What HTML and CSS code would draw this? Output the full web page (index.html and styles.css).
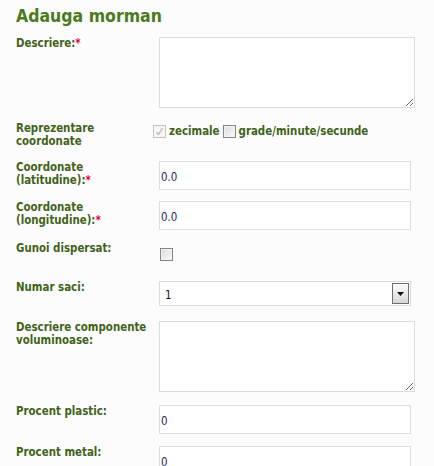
FILE: index.html
```html
<!DOCTYPE html>
<html>
<head>
<meta charset="utf-8">
<link rel="stylesheet" href="styles.css">
</head>
<body>
<h1 class="title">Adauga morman</h1>
<form class="form">
  <div class="row r1">
    <label class="lbl">Descriere:<span class="req">*</span></label>
    <div class="field"><textarea class="area"></textarea></div>
  </div>
  <div class="row r2">
    <label class="lbl">Reprezentare<br>coordonate</label>
    <div class="field checks">
      <span class="cb cb-on"><svg width="11" height="11" viewBox="0 0 11 11"><path d="M2.5 6.5 L4.5 8.5 L8.5 2" fill="none" stroke="#b8b8b8" stroke-width="1.3"/></svg></span>
      <span class="ctext">zecimale</span>
      <span class="cb cb-off"></span>
      <span class="ctext">grade/minute/secunde</span>
    </div>
  </div>
  <div class="row r3">
    <label class="lbl">Coordonate<br>(latitudine):<span class="req">*</span></label>
    <div class="field"><input class="txt" type="text" value="0.0"></div>
  </div>
  <div class="row r4">
    <label class="lbl">Coordonate<br>(longitudine):<span class="req">*</span></label>
    <div class="field"><input class="txt" type="text" value="0.0"></div>
  </div>
  <div class="row r5">
    <label class="lbl">Gunoi dispersat:</label>
    <div class="field"><span class="cb cb-off cb-g"></span></div>
  </div>
  <div class="row r6">
    <label class="lbl">Numar saci:</label>
    <div class="field">
      <div class="sel">
        <span class="sel-val">1</span>
        <span class="sel-btn"><svg width="7" height="4" viewBox="0 0 7 4"><path d="M0 0 H7 L3.5 4 Z" fill="#111"/></svg></span>
      </div>
    </div>
  </div>
  <div class="row r7">
    <label class="lbl">Descriere componente<br>voluminoase:</label>
    <div class="field"><textarea class="area"></textarea></div>
  </div>
  <div class="row r8">
    <label class="lbl">Procent plastic:</label>
    <div class="field"><input class="txt" type="text" value="0"></div>
  </div>
  <div class="row r9">
    <label class="lbl">Procent metal:</label>
    <div class="field"><input class="txt" type="text" value="0"></div>
  </div>
</form>
</body>
</html>
```
FILE: styles.css
```css
html, body {
  margin: 0;
  padding: 0;
  background: #fcfcfc;
  overflow: hidden;
}
body {
  padding-left: 16px;
  font-family: "DejaVu Sans Condensed", "DejaVu Sans", sans-serif;
}
.title {
  margin: 0;
  padding-top: 6px;
  height: 31px;
  font-size: 17.5px;
  line-height: 20px;
  font-weight: bold;
  color: #4b7a1f;
}
.form {
  display: flex;
  flex-direction: column;
}
.row {
  display: flex;
  align-items: flex-start;
}
.lbl {
  width: 143px;
  flex: none;
  font-size: 11.4px;
  line-height: 13px;
  font-weight: bold;
  color: #42621a;
}
.req {
  color: #e8003c;
}
.field {
  display: flex;
  align-items: flex-start;
}
.area {
  width: 256px;
  height: 71px;
  box-sizing: border-box;
  border: 1px solid #dcdcdc;
  background: #fff;
  margin: 0;
  padding: 2px;
  resize: both;
  display: block;
}
.txt {
  width: 252px;
  height: 29px;
  box-sizing: border-box;
  border: 1px solid #dedede;
  background: #fff;
  margin: 0;
  padding: 2px 1px 0;
  font-family: "DejaVu Sans Condensed", "DejaVu Sans", sans-serif;
  font-size: 11.4px;
  color: #1d1d5c;
  outline: none;
  display: block;
}
.r1 { margin-bottom: 14px; }
.r2 { margin-bottom: 13px; }
.r3 { margin-bottom: 11px; }
.r4 { margin-bottom: 12px; }
.r5 { height: 39px; }
.r6 { margin-bottom: 15px; }
.r7 { margin-bottom: 13px; }
.r8 { margin-bottom: 12px; }
.checks {
  margin-left: -6px;
  padding-top: 3px;
  align-items: center;
  font-size: 11.4px;
  line-height: 13px;
  font-weight: bold;
  color: #42621a;
}
.cb {
  display: inline-flex;
  align-items: center;
  justify-content: center;
  width: 13px;
  height: 13px;
  box-sizing: border-box;
  flex: none;
}
.cb-on {
  border: 1px solid #c4c4c4;
  background: #f6f6f6;
}
.cb-off {
  border: 1px solid #858585;
  background: linear-gradient(135deg, #dcdcdc, #fafafa);
  box-shadow: inset 0 0 0 1px #f4f4f4;
}
.cb-g {
  margin-top: 6px;
  margin-left: 1px;
}
.ctext {
  margin: 0 3px 0 3px;
}
.sel {
  width: 252px;
  height: 25px;
  box-sizing: border-box;
  border: 1px solid #dcdcdc;
  background: #fff;
  display: flex;
  align-items: center;
  justify-content: space-between;
  padding: 1px 1px 1px 5px;
}
.sel-val {
  font-size: 11.4px;
  color: #111;
  padding-top: 2px;
}
.sel-btn {
  width: 17px;
  height: 100%;
  box-sizing: border-box;
  border: 1px solid #6e6e6e;
  background: linear-gradient(#fdfdfd, #d6d6d6);
  display: flex;
  align-items: center;
  justify-content: center;
}
```
